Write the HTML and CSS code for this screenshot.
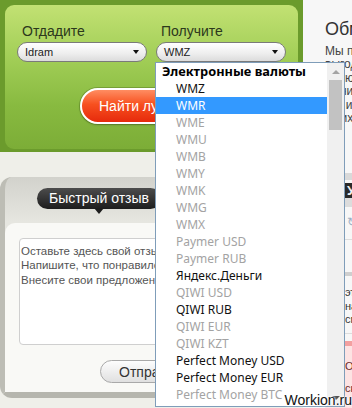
FILE: index.html
```html
<!DOCTYPE html>
<html>
<head>
    <meta charset="UTF-8">
    <title>Обмен электронных валют</title>
    <link rel="stylesheet" href="styles.css">
</head>
<body>
    <div class="page">
        <div class="left-col">
            <div class="exchange">
                <div class="exchange-inner">
                    <div class="exchange-fields">
                        <div class="field">
                            <div class="field-label">Отдадите</div>
                            <div class="select"><span>Idram</span><i class="select-arrow"></i></div>
                        </div>
                        <div class="field">
                            <div class="field-label">Получите</div>
                            <div class="select"><span>WMZ</span><i class="select-arrow"></i></div>
                        </div>
                    </div>
                    <button class="find-btn">Найти лучший курс</button>
                </div>
            </div>

            <div class="feedback">
                <div class="feedback-title">Быстрый отзыв</div>
                <div class="feedback-body">
                    <textarea class="feedback-text" placeholder="Оставьте здесь свой отзыв.&#10;Напишите, что понравилось на сайте.&#10;Внесите свои предложения."></textarea>
                    <button class="send-btn">Отправить</button>
                </div>
            </div>
        </div>

        <div class="right-col">
            <h1 class="about-title">Обмен электронных валют</h1>
            <p class="about-text">
                Мы поможем найти самый<br>
                выгодный курс обмена<br>
                валюты среди десятков<br>
                мониторинговых сайтов<br>
                кто ищет надёжный<br>
                из их обменников.
            </p>

            <div class="rates">
                <div class="rates-top"></div>
                <div class="rates-head">Удобный обмен</div>
                <div class="rates-sub"></div>
                <div class="rates-tabs"><span>↻ обновить</span></div>
                <div class="rates-strip"></div>
                <div class="rates-rows">
                    <div>этого курса</div>
                    <div>нам удобно</div>
                    <div>смL обмен</div>
                </div>
                <div class="rates-alert">
                    <div>Особые условия</div>
                    <div>сканирование</div>
                </div>
            </div>
        </div>
    </div>

    <!-- открытый список "Получите" -->
    <div class="dropdown">
        <div class="dropdown-list">
            <div class="dropdown-group">Электронные валюты</div>
            <div class="dropdown-item">WMZ</div>
            <div class="dropdown-item selected">WMR</div>
            <div class="dropdown-item disabled">WME</div>
            <div class="dropdown-item disabled">WMU</div>
            <div class="dropdown-item disabled">WMB</div>
            <div class="dropdown-item disabled">WMY</div>
            <div class="dropdown-item disabled">WMK</div>
            <div class="dropdown-item disabled">WMG</div>
            <div class="dropdown-item disabled">WMX</div>
            <div class="dropdown-item disabled">Paymer USD</div>
            <div class="dropdown-item disabled">Paymer RUB</div>
            <div class="dropdown-item">Яндекс.Деньги</div>
            <div class="dropdown-item disabled">QIWI USD</div>
            <div class="dropdown-item">QIWI RUB</div>
            <div class="dropdown-item disabled">QIWI EUR</div>
            <div class="dropdown-item disabled">QIWI KZT</div>
            <div class="dropdown-item">Perfect Money USD</div>
            <div class="dropdown-item">Perfect Money EUR</div>
            <div class="dropdown-item disabled">Perfect Money BTC</div>
        </div>
        <div class="dropdown-scroll">
            <div class="scroll-btn"><i class="arrow-up"></i></div>
            <div class="scroll-track"><div class="scroll-thumb"></div></div>
            <div class="scroll-btn"><i class="arrow-down"></i></div>
        </div>
    </div>

    <div class="watermark">Workion.ru</div>
</body>
</html>
```

FILE: styles.css
```css
html, body {
    margin: 0;
    height: 100%;
    overflow: hidden;
}

body {
    font-family: "Liberation Sans", Arial, sans-serif;
    background-color: #efefe9;
    color: #333;
    position: relative;
}

.page {
    display: grid;
    grid-template-columns: 303px 320px;
    align-items: start;
}

/* Green exchange block */
.exchange {
    background-color: #6b9b2c;
    padding: 5px 5px 3px 5px;
}

.exchange-inner {
    box-sizing: border-box;
    height: 144px;
    padding: 17px 12px 0;
    border-radius: 9px;
    background: linear-gradient(#c2e173, #a3cf58 35%, #88ba40 70%, #7cad37);
}

.exchange-fields {
    display: grid;
    grid-template-columns: 130px 130px;
    gap: 9px;
}

.field-label {
    font-size: 14px;
    line-height: 18px;
    padding-left: 5px;
    color: #2c381c;
}

.select {
    box-sizing: border-box;
    height: 20px;
    margin-top: 2px;
    padding: 0 7px;
    display: flex;
    align-items: center;
    justify-content: space-between;
    border: 1px solid #7a7a7a;
    border-radius: 10px;
    background: linear-gradient(#ffffff, #efefef 55%, #dcdcdc);
    font-size: 11px;
    color: #222;
}

.select-arrow {
    width: 0;
    height: 0;
    border-left: 3.5px solid transparent;
    border-right: 3.5px solid transparent;
    border-top: 4px solid #111;
}

.find-btn {
    display: block;
    height: 36px;
    margin: 26px 0 0 63px;
    padding: 0 17px;
    border: 2px solid #fff;
    border-radius: 18px;
    background: linear-gradient(#ff8d62, #f7501f 45%, #e62a0c);
    box-shadow: 0 0 0 1px rgba(70, 100, 30, 0.35), 0 1px 2px rgba(0, 0, 0, 0.25);
    color: #fff;
    font-family: "Liberation Sans", Arial, sans-serif;
    font-size: 14px;
}

/* Feedback block */
.feedback {
    width: 300px;
    margin-top: 25px;
    padding-top: 11px;
    border-left: 5px solid #bdbdb5;
    border-bottom: 6px solid #b6b6ae;
    border-radius: 12px;
    background: linear-gradient(#d2d2cc, #e6e6e0 45px);
}

.feedback-title {
    position: relative;
    width: fit-content;
    height: 21px;
    margin-left: 32px;
    padding: 0 12px;
    line-height: 21px;
    border-radius: 11px;
    background: linear-gradient(#4c4c4c, #1d1d1d);
    color: #fff;
    font-size: 14px;
}

.feedback-title::after {
    content: "";
    position: absolute;
    left: 50%;
    bottom: -5px;
    margin-left: -5px;
    border-left: 5px solid transparent;
    border-right: 5px solid transparent;
    border-top: 6px solid #1d1d1d;
}

.feedback-body {
    margin-top: 14px;
    padding: 15px 13px 9px 14px;
    border-radius: 10px 10px 0 0;
    background-color: #f9f9f6;
}

.feedback-text {
    display: block;
    box-sizing: border-box;
    width: 268px;
    height: 107px;
    margin: 0;
    padding: 5px 1px;
    border: 1px solid #cfcfcf;
    border-radius: 4px;
    background: #fff;
    font-family: "Liberation Sans", Arial, sans-serif;
    font-size: 11.5px;
    line-height: 14.3px;
    resize: none;
}

.feedback-text::placeholder {
    color: #555;
}

.send-btn {
    display: block;
    height: 23px;
    margin: 15px 0 0 81px;
    padding: 0 18px;
    border: 1px solid #a9a9a9;
    border-radius: 12px;
    background: linear-gradient(#fdfdfd, #e0e0e0);
    color: #333;
    font-family: "Liberation Sans", Arial, sans-serif;
    font-size: 14px;
}

/* Right column */
.right-col {
    height: 408px;
    padding: 18px 0 0 22px;
    background-color: #f7f7f7;
}

.about-title {
    margin: 0;
    font-size: 18px;
    line-height: 22px;
    font-weight: normal;
    color: #333;
    white-space: nowrap;
}

.about-text {
    margin: 5px 0 0;
    font-size: 12px;
    line-height: 13.4px;
    color: #444;
}

.rates {
    margin-top: 48px;
}

.rates-top {
    height: 7px;
    background-color: #d9d9d9;
}

.rates-head {
    height: 15px;
    margin-top: 3px;
    padding-left: 22px;
    line-height: 15px;
    background-color: #2a2a2a;
    color: #f2f2f2;
    font-size: 13px;
    font-weight: bold;
}

.rates-sub {
    height: 9px;
    background-color: #dcdcdc;
}

.rates-tabs {
    height: 32px;
    border-bottom: 1px solid #dddddd;
}

.rates-tabs span {
    display: block;
    padding: 8px 0 0 22px;
    color: #9fb0c4;
    font-size: 12px;
}

.rates-strip {
    height: 4px;
    margin-top: 32px;
    background-color: #cfcfcf;
}

.rates-rows {
    padding: 10px 0 6px 20px;
    border-bottom: 1px solid #dddddd;
    font-size: 11px;
    line-height: 13.5px;
    color: #333;
}

.rates-alert {
    margin-top: 7px;
    padding: 9px 0 0 20px;
    border-top: 5px solid #f3a0a0;
    background-color: #fde3e3;
    font-size: 11px;
    line-height: 22px;
    color: #6b2a2a;
    height: 80px;
}

/* Open select list */
.dropdown {
    position: absolute;
    left: 155px;
    top: 62px;
    width: 190px;
    height: 345px;
    box-sizing: border-box;
    display: flex;
    border: 1px solid #7f9db9;
    background-color: #fff;
    font-family: "Noto Sans", "Liberation Sans", sans-serif;
    font-size: 12px;
    overflow: hidden;
}

.dropdown-list {
    flex-grow: 1;
}

.dropdown-group {
    height: 17px;
    line-height: 17px;
    padding-left: 6px;
    font-size: 12.8px;
    font-weight: bold;
    color: #000;
    white-space: nowrap;
}

.dropdown-item {
    height: 17px;
    line-height: 17px;
    padding-left: 20px;
    color: #111;
    white-space: nowrap;
}

.dropdown-item.disabled {
    color: #a3a3a3;
}

.dropdown-item.selected {
    background-color: #3399ff;
    color: #fff;
}

.dropdown-scroll {
    width: 17px;
    display: flex;
    flex-direction: column;
    background-color: #f0f0f0;
}

.scroll-btn {
    height: 17px;
    display: flex;
    align-items: center;
    justify-content: center;
}

.scroll-track {
    flex-grow: 1;
    padding: 0 2px;
}

.scroll-thumb {
    height: 50px;
    background-color: #c2c2c2;
}

.arrow-up {
    border-left: 4px solid transparent;
    border-right: 4px solid transparent;
    border-bottom: 4px solid #a3a3a3;
}

.arrow-down {
    border-left: 4px solid transparent;
    border-right: 4px solid transparent;
    border-top: 4px solid #505050;
}

.watermark {
    position: absolute;
    right: 0;
    bottom: 0;
    line-height: 16px;
    font-size: 14px;
    color: #111;
    text-shadow: 0 0 2px #fff, 0 0 2px #fff, 0 0 3px #fff;
}
```
